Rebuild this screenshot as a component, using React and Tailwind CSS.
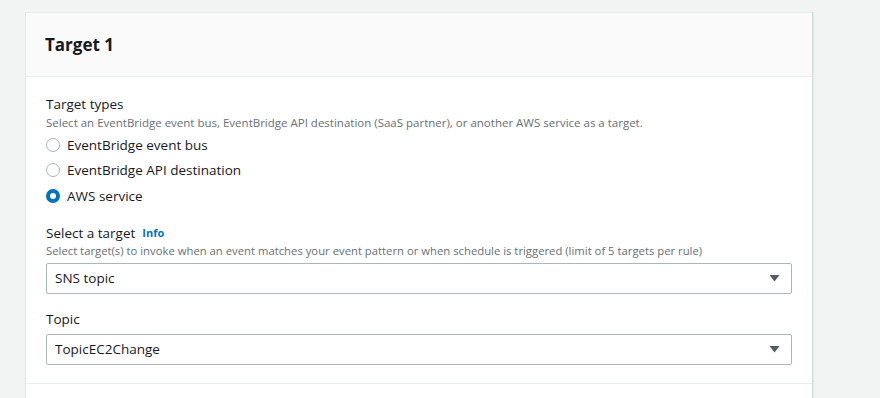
import { useState } from 'react';

// Radio option row
function Radio({ label, checked, onChange }) {
  return (
    <label className="flex items-center h-[25.5px] cursor-pointer" onClick={onChange}>
      {checked ? (
        <span className="w-[14px] h-[14px] rounded-full border-[4px] border-[#0073bb] bg-white" />
      ) : (
        <span className="w-[14px] h-[14px] rounded-full border border-[#aab7b8] bg-white" />
      )}
      <span className="ml-[7px] text-[13.5px] text-[#16191f]">{label}</span>
    </label>
  );
}

// Select-like box with caret
function SelectBox({ value }) {
  return (
    <div className="flex items-center justify-between h-[31px] border border-[#aab7b8] rounded-[2px] bg-white pl-[8px] pr-[11px]">
      <span className="text-[13.5px] text-[#16191f]">{value}</span>
      <svg width="11" height="8" viewBox="0 0 11 8">
        <path d="M0.5 1h10L5.5 7.5z" fill="#545b64" />
      </svg>
    </div>
  );
}

export default function App() {
  const [type, setType] = useState('aws');

  return (
    <div className="w-[880px] h-[398px] overflow-hidden bg-[#f2f3f3] pt-[12px] pl-[25px] font-['Open_Sans',sans-serif]">
      <div className="w-[787px] h-[400px] bg-white border-l border-[#e4e6e6] border-t border-t-[#eaeded] shadow-[1px_0_0_#d5dbdb,2px_0_0_#e6e9e9]">
        {/* Header */}
        <div className="h-[64px] bg-[#fafafa] border-b border-[#eaeded] flex items-center pl-[19px]">
          <h2 className="text-[17px] font-bold text-[#16191f] leading-none">Target 1</h2>
        </div>

        {/* Body */}
        <div className="px-[20px] pt-[17px]">
          <div className="text-[13.5px] text-[#16191f] leading-[20px]">Target types</div>
          <div className="text-[11.5px] text-[#687078] leading-[16px] mt-[1px]">
            Select an EventBridge event bus, EventBridge API destination (SaaS partner), or another AWS service as a target.
          </div>
          <div className="mt-[1px]">
            <Radio label="EventBridge event bus" checked={type === 'bus'} onChange={() => setType('bus')} />
            <Radio label="EventBridge API destination" checked={type === 'api'} onChange={() => setType('api')} />
            <Radio label="AWS service" checked={type === 'aws'} onChange={() => setType('aws')} />
          </div>

          <div className="mt-[14px] flex items-center leading-[20px]">
            <span className="text-[13.5px] text-[#16191f]">Select a target</span>
            <span className="ml-[7px] text-[11px] font-bold text-[#0073bb]">Info</span>
          </div>
          <div className="text-[11.3px] text-[#687078] leading-[16px]">
            Select target(s) to invoke when an event matches your event pattern or when schedule is triggered (limit of 5 targets per rule)
          </div>
          <div className="mt-[4px]">
            <SelectBox value="SNS topic" />
          </div>

          <div className="mt-[15px] text-[13.5px] text-[#16191f] leading-[20px]">Topic</div>
          <div className="mt-[5px]">
            <SelectBox value="TopicEC2Change" />
          </div>
        </div>

        <div className="mt-[18px] border-t border-[#eaeded]" />
      </div>
    </div>
  );
}
